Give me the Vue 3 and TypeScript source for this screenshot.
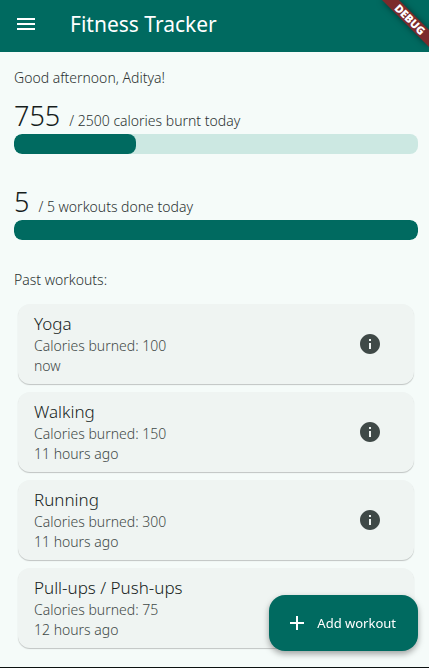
<script setup lang="ts">
import { computed, ref } from 'vue'

interface Workout {
  name: string
  calories: number
  when: string
}

interface Goal {
  label: string
  value: number
  target: number
  unit: string
}

const user = ref('Aditya')

const goals = ref<Goal[]>([
  { label: 'Calories', value: 755, target: 2500, unit: 'calories burnt today' },
  { label: 'Workouts', value: 5, target: 5, unit: 'workouts done today' },
])

const workouts = ref<Workout[]>([
  { name: 'Yoga', calories: 100, when: 'now' },
  { name: 'Walking', calories: 150, when: '11 hours ago' },
  { name: 'Running', calories: 300, when: '11 hours ago' },
  { name: 'Pull-ups / Push-ups', calories: 75, when: '12 hours ago' },
])

const bars = computed(() =>
  goals.value.map((g) => ({ ...g, percent: Math.min(100, (g.value / g.target) * 100) })),
)
</script>

<template>
  <div class="page">
    <header class="app-bar">
      <button class="icon-button" type="button" aria-label="Open menu">
        <svg viewBox="0 0 24 24" width="24" height="24" fill="currentColor">
          <path d="M3 18h18v-2H3v2zm0-5h18v-2H3v2zm0-7v2h18V6H3z" />
        </svg>
      </button>
      <h1 class="title">Fitness Tracker</h1>
      <svg class="banner" viewBox="0 0 60 52" width="60" height="52">
        <polygon class="ribbon" points="13,0 30,0 60,30 60,47" />
        <text class="ribbon-text" transform="translate(41 19.5) rotate(45)" text-anchor="middle" y="4">DEBUG</text>
      </svg>
    </header>

    <main class="content">
      <p class="greeting">Good afternoon, {{ user }}!</p>

      <section class="goals">
        <div v-for="g in bars" :key="g.label" class="goal">
          <p class="goal-text">
            <span class="goal-value">{{ g.value }}</span>
            <span>/ {{ g.target }} {{ g.unit }}</span>
          </p>
          <div
            class="track"
            role="progressbar"
            :aria-label="g.label"
            :aria-valuenow="g.value"
            :aria-valuemax="g.target"
          >
            <div class="fill" :style="{ width: g.percent + '%' }"></div>
          </div>
        </div>
      </section>

      <h2 class="subtitle">Past workouts:</h2>

      <ul class="list">
        <li v-for="w in workouts" :key="w.name" class="card">
          <div class="card-text">
            <h3 class="card-title">{{ w.name }}</h3>
            <p>Calories burned: {{ w.calories }}</p>
            <p>{{ w.when }}</p>
          </div>
          <button class="icon-button" type="button" :aria-label="'Details of ' + w.name">
            <svg viewBox="0 0 24 24" width="24" height="24" fill="currentColor">
              <path
                d="M12 2C6.48 2 2 6.48 2 12s4.48 10 10 10 10-4.480 10-10S17.520 2 12 2zm1 15h-2v-6h2v6zm0-8h-2V7h2v2z"
              />
            </svg>
          </button>
        </li>
      </ul>
    </main>

    <button class="fab" type="button">
      <svg viewBox="0 0 24 24" width="24" height="24" fill="currentColor">
        <path d="M19 13h-6v6h-2v-6H5v-2h6V5h2v6h6v2z" />
      </svg>
      <span>Add workout</span>
    </button>
  </div>
</template>

<style>
body {
  background: #f5fbf9;
}
</style>

<style scoped>
.page {
  box-sizing: border-box;
  min-height: 100vh;
  background: #f5fbf9;
  border-bottom: 1px solid #0c1211;
  color: #2b3231;
  font-family: 'Noto Sans', 'Open Sans', sans-serif;
  font-size: 14px;
  font-weight: 300;
  line-height: 20px;
}

h1,
h2,
h3,
p,
ul {
  margin: 0;
  padding: 0;
  font-weight: inherit;
}

button {
  border: 0;
  font: inherit;
  cursor: pointer;
}

svg {
  display: block;
}

.app-bar {
  box-sizing: border-box;
  position: relative;
  display: flex;
  align-items: center;
  gap: 32px;
  height: 52px;
  padding: 0 14px 4px;
  overflow: hidden;
  background: #006a60;
  color: #fff;
}

.icon-button {
  padding: 0;
  background: none;
  color: inherit;
}

.title {
  font-size: 21px;
  font-weight: 400;
  line-height: 28px;
}

.banner {
  position: absolute;
  top: 0;
  right: 0;
}

.ribbon {
  fill: #7b2b2c;
  filter: drop-shadow(0 0 3px rgba(0, 0, 0, 0.5));
}

.ribbon-text {
  fill: #fff;
  font-size: 11px;
  font-weight: 900;
}

.content {
  padding: 16px 11px 19px 14px;
}

.goals {
  display: grid;
  gap: 30px;
  margin: 10px 0 30px;
}

.goal-text {
  display: flex;
  align-items: baseline;
  gap: 9px;
  height: 36px;
}

.goal-value {
  color: #161d1c;
  font-size: 27px;
  line-height: 36px;
}

.track {
  height: 20px;
  overflow: hidden;
  border-radius: 8px;
  background: #cce8e2;
}

.fill {
  height: 100%;
  border-radius: 8px;
  background: #006a60;
}

.subtitle {
  font-size: 14px;
}

.list {
  display: grid;
  gap: 8px;
  margin: 14px 4px 0;
  list-style: none;
}

.card {
  display: flex;
  align-items: center;
  justify-content: space-between;
  padding: 8px 32px 8px 16px;
  border-radius: 12px;
  background: #eff4f2;
  box-shadow: 0 1px 1px rgba(0, 0, 0, 0.22);
  color: #3f4947;
}

.card-title {
  color: #161d1c;
  font-size: 17px;
  line-height: 24px;
}

.fab {
  position: fixed;
  right: 11px;
  bottom: 17px;
  display: flex;
  align-items: center;
  gap: 8px;
  height: 56px;
  padding: 0 22px 0 16px;
  border-radius: 16px;
  background: #006a60;
  box-shadow: 0 3px 6px rgba(0, 0, 0, 0.35);
  color: #fff;
  font-size: 13px;
  font-weight: 400;
}
</style>
